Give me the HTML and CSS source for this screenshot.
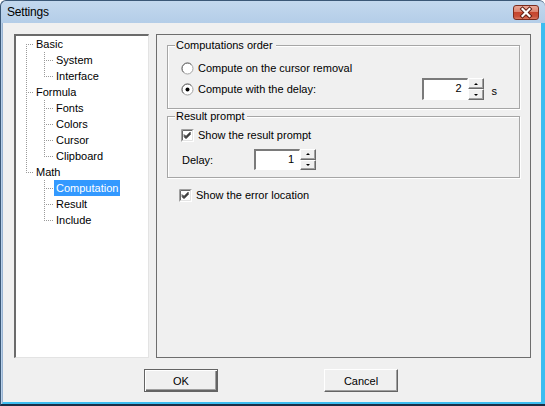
FILE: index.html
```html
<!DOCTYPE html>
<html>
<head>
<meta charset="utf-8">
<title>Settings</title>
<link rel="stylesheet" href="styles.css">
</head>
<body>
<div class="window">
  <div class="titlebar">
    <span class="title">Settings</span>
    <span class="close">
      <svg width="26" height="15" viewBox="0 0 26 15">
        <path d="M9.5 4 L16.5 11 M16.5 4 L9.5 11" stroke="#5a1a10" stroke-width="4" stroke-linecap="square"/>
        <path d="M9.5 4 L16.5 11 M16.5 4 L9.5 11" stroke="#fff" stroke-width="2.2" stroke-linecap="square"/>
      </svg>
    </span>
  </div>
  <div class="client">
    <div class="main">
      <div class="tree">
        <div class="row"><span class="g first"></span><span class="label">Basic</span></div>
        <div class="row"><span class="g pipe"></span><span class="g2 tee"></span><span class="label">System</span></div>
        <div class="row"><span class="g pipe"></span><span class="g2 elbow"></span><span class="label">Interface</span></div>
        <div class="row"><span class="g tee"></span><span class="label">Formula</span></div>
        <div class="row"><span class="g pipe"></span><span class="g2 tee"></span><span class="label">Fonts</span></div>
        <div class="row"><span class="g pipe"></span><span class="g2 tee"></span><span class="label">Colors</span></div>
        <div class="row"><span class="g pipe"></span><span class="g2 tee"></span><span class="label">Cursor</span></div>
        <div class="row"><span class="g pipe"></span><span class="g2 elbow"></span><span class="label">Clipboard</span></div>
        <div class="row"><span class="g elbow"></span><span class="label">Math</span></div>
        <div class="row"><span class="g"></span><span class="g2 tee"></span><span class="label selected">Computation</span></div>
        <div class="row"><span class="g"></span><span class="g2 tee"></span><span class="label">Result</span></div>
        <div class="row"><span class="g"></span><span class="g2 elbow"></span><span class="label">Include</span></div>
      </div>
      <div class="panel">
        <div class="group g-order">
          <div class="group-title">Computations order</div>
          <div class="opt opt-r1">
            <svg class="radio" width="13" height="13" viewBox="0 0 13 13">
              <circle cx="6.5" cy="6.5" r="5.5" fill="#fff" stroke="#a0a0a0"/>
              <path d="M2.6 10.4 A5.5 5.5 0 0 1 10.4 2.6" fill="none" stroke="#6e6e6e"/>
            </svg>
            <span>Compute on the cursor removal</span>
          </div>
          <div class="opt opt-r2">
            <svg class="radio" width="13" height="13" viewBox="0 0 13 13">
              <circle cx="6.5" cy="6.5" r="5.5" fill="#fff" stroke="#a0a0a0"/>
              <path d="M2.6 10.4 A5.5 5.5 0 0 1 10.4 2.6" fill="none" stroke="#6e6e6e"/>
              <circle cx="6.5" cy="6.5" r="2" fill="#000"/>
            </svg>
            <span>Compute with the delay:</span>
            <div class="spin spin-delay1">
              <div class="field">2</div>
              <div class="spin-btns">
                <span class="sb"><span class="arrow up"></span></span>
                <span class="sb"><span class="arrow down"></span></span>
              </div>
            </div>
            <span class="unit">s</span>
          </div>
        </div>
        <div class="group g-result">
          <div class="group-title">Result prompt</div>
          <div class="opt opt-c1">
            <svg class="check" width="13" height="13" viewBox="0 0 13 13">
              <rect x="0" y="0" width="13" height="13" fill="#fff"/>
              <path d="M0.5 12.5 V0.5 H12.5" fill="none" stroke="#a0a0a0"/>
              <path d="M1.5 11.5 V1.5 H11.5" fill="none" stroke="#696969"/>
              <path d="M1.5 11.5 H11.5 V1.5" fill="none" stroke="#e3e3e3"/>
              <path d="M3 5.5 L5 7.5 L9.5 3 M3 6.5 L5 8.5 L9.5 4 M3 7.5 L5 9.5 L9.5 5" fill="none" stroke="#000" stroke-width="1"/>
            </svg>
            <span>Show the result prompt</span>
          </div>
          <div class="opt opt-delay">
            <span class="delay-label">Delay:</span>
            <div class="spin">
              <div class="field">1</div>
              <div class="spin-btns">
                <span class="sb"><span class="arrow up"></span></span>
                <span class="sb"><span class="arrow down"></span></span>
              </div>
            </div>
          </div>
        </div>
        <div class="opt opt-c2">
          <svg class="check" width="13" height="13" viewBox="0 0 13 13">
            <rect x="0" y="0" width="13" height="13" fill="#fff"/>
            <path d="M0.5 12.5 V0.5 H12.5" fill="none" stroke="#a0a0a0"/>
            <path d="M1.5 11.5 V1.5 H11.5" fill="none" stroke="#696969"/>
            <path d="M1.5 11.5 H11.5 V1.5" fill="none" stroke="#e3e3e3"/>
            <path d="M3 5.5 L5 7.5 L9.5 3 M3 6.5 L5 8.5 L9.5 4 M3 7.5 L5 9.5 L9.5 5" fill="none" stroke="#000" stroke-width="1"/>
          </svg>
          <span>Show the error location</span>
        </div>
      </div>
    </div>
    <div class="buttons">
      <div class="btn default"><span>OK</span></div>
      <div class="btn"><span>Cancel</span></div>
    </div>
  </div>
</div>
</body>
</html>
```

FILE: styles.css
```css
* { box-sizing: border-box; }
html, body { margin: 0; padding: 0; background: #fff; }
body {
  font-family: "Liberation Sans", Arial, sans-serif;
  font-size: 11px;
  color: #000;
}
.window {
  width: 545px;
  height: 406px;
  border: 1px solid #3b5877;
  border-right: none;
  border-bottom: 2px solid #1c2d44;
  border-radius: 6px 6px 0 0;
  padding-left: 1px;
  background: linear-gradient(to bottom, #c3d8ee, #b4cde8 22px, #b9d1ea);
  display: flex;
  flex-direction: column;
  overflow: hidden;
}
.titlebar {
  height: 22px;
  flex: none;
  display: flex;
  align-items: center;
  justify-content: space-between;
  padding: 0 6px 0 5px;
}
.title {
  font-size: 12px;
  color: #000;
  letter-spacing: -0.2px;
}
.close {
  width: 26px;
  height: 15px;
  border: 1px solid #7b2b1d;
  border-radius: 3px;
  background: linear-gradient(to bottom, #e9a797 0%, #dc8470 45%, #c6452d 50%, #c9503a 80%, #dc7a62 100%);
  display: flex;
  align-items: center;
  justify-content: center;
  overflow: hidden;
}
.close svg { display: block; margin: -1px; }
.client {
  flex: 1;
  background: #f0f0f0;
  border-left: 1px solid #9ab4d2;
  border-right: 4px solid #3cbdf0;
  border-bottom: 2px solid #3cbdf0;
  padding: 11px 10px 10px 11px;
  display: flex;
  flex-direction: column;
}
.main {
  height: 324px;
  display: flex;
  gap: 7px;
}
.tree {
  width: 135px;
  background: #fff;
  border-top: 2px solid #6b6b6b;
  border-left: 2px solid #6b6b6b;
  border-right: 1px solid #e3e3e3;
  border-bottom: 1px solid #e3e3e3;
  display: flex;
  flex-direction: column;
}
.row {
  height: 16px;
  display: flex;
  align-items: stretch;
  line-height: 16px;
}
.g, .g2 {
  flex: none;
  background-repeat: no-repeat;
}
.g { width: 18px; }
.g2 { width: 20px; }
.tee {
  background-image:
    repeating-linear-gradient(to bottom, #9a9a9a 0 1px, transparent 1px 2px),
    repeating-linear-gradient(to right, #9a9a9a 0 1px, transparent 1px 2px);
  background-position: 10px 0, 10px 8px;
  background-size: 1px 16px, calc(100% - 10px) 1px;
}
.elbow {
  background-image:
    repeating-linear-gradient(to bottom, #9a9a9a 0 1px, transparent 1px 2px),
    repeating-linear-gradient(to right, #9a9a9a 0 1px, transparent 1px 2px);
  background-position: 10px 0, 10px 8px;
  background-size: 1px 9px, calc(100% - 10px) 1px;
}
.first {
  background-image:
    repeating-linear-gradient(to bottom, #9a9a9a 0 1px, transparent 1px 2px),
    repeating-linear-gradient(to right, #9a9a9a 0 1px, transparent 1px 2px);
  background-position: 10px 8px, 10px 8px;
  background-size: 1px 8px, calc(100% - 10px) 1px;
}
.pipe {
  background-image: repeating-linear-gradient(to bottom, #9a9a9a 0 1px, transparent 1px 2px);
  background-position: 10px 0;
  background-size: 1px 16px;
}
.label {
  padding: 0 2px;
  white-space: nowrap;
}
.label.selected {
  background: #3399ff;
  color: #fff;
}
.panel {
  width: 375px;
  border: 1px solid #6d6d6d;
  padding: 10px 10px 0 10px;
  display: flex;
  flex-direction: column;
}
.group {
  border: 1px solid #a6a6a6;
  box-shadow: 1px 1px 0 #fff, inset 1px 1px 0 #fff;
  display: flex;
  flex-direction: column;
  padding: 0 0 0 13px;
}
.group-title {
  margin: -7px 0 0 -6px;
  padding: 0 3px 0 1px;
  line-height: 13px;
  height: 13px;
  background: #f0f0f0;
  align-self: flex-start;
}
.g-order { padding-bottom: 8px; padding-right: 22px; }
.g-result { margin-top: 7px; padding-bottom: 7px; }
.opt {
  display: flex;
  align-items: center;
  white-space: nowrap;
}
.radio, .check { flex: none; display: block; margin-right: 4px; }
.opt-r1 { height: 20px; margin-top: 6px; }
.opt-r2 { height: 22px; }
.opt-c1 { height: 20px; margin-top: 2px; }
.opt-delay { height: 21px; margin-top: 4px; padding-left: 1px; }
.opt-c2 { height: 20px; margin-top: 7px; padding-left: 12px; }
.delay-label { width: 72px; }
.spin {
  display: flex;
  height: 22px;
}
.spin-delay1 { margin-left: auto; }
.opt-delay .spin { height: 21px; }
.field {
  width: 46px;
  background: #fff;
  border-top: 2px solid #7a7a7a;
  border-left: 2px solid #7a7a7a;
  border-right: 1px solid #fff;
  border-bottom: 1px solid #fff;
  text-align: right;
  padding-right: 5px;
  line-height: 16px;
  font-size: 11px;
}
.spin-btns {
  width: 16px;
  display: flex;
  flex-direction: column;
}
.sb {
  flex: 1;
  background: #f0f0f0;
  border-top: 1px solid #fff;
  border-left: 1px solid #fff;
  border-right: 1px solid #6a6a6a;
  border-bottom: 1px solid #6a6a6a;
  box-shadow: inset -1px -1px 0 #a0a0a0;
  display: flex;
  align-items: center;
  justify-content: center;
}
.arrow {
  width: 0;
  height: 0;
  border-left: 2px solid transparent;
  border-right: 2px solid transparent;
}
.arrow.up { border-bottom: 2px solid #000; }
.arrow.down { border-top: 2px solid #000; }
.unit { margin-left: 8px; margin-top: 3px; }
.buttons {
  margin-top: 11px;
  display: flex;
  gap: 106px;
  padding-left: 130px;
}
.btn {
  width: 74px;
  height: 23px;
  background: #f0f0f0;
  border-top: 1px solid #fff;
  border-left: 1px solid #fff;
  border-right: 1px solid #646464;
  border-bottom: 1px solid #646464;
  box-shadow: inset -1px -1px 0 #a0a0a0;
  display: flex;
  align-items: center;
  justify-content: center;
}
.btn.default {
  border: 1px solid #646464;
  box-shadow: inset 1px 1px 0 #fff, inset -1px -1px 0 #646464, inset -2px -2px 0 #a0a0a0;
}
```
